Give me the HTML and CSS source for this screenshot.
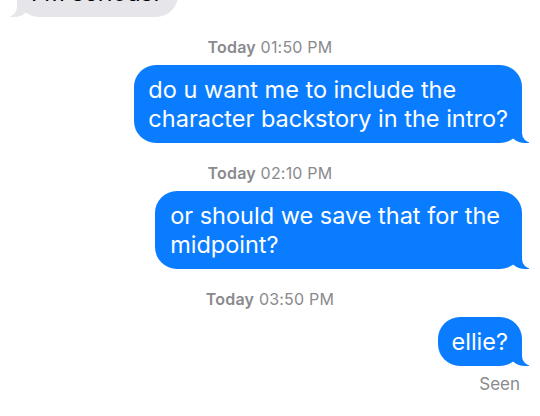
FILE: index.html
```html
<!DOCTYPE html>
<html lang="en">
<head>
    <meta charset="UTF-8">
    <meta name="viewport" content="width=device-width, initial-scale=1.0">
    <title>Messages</title>
    <link rel="stylesheet" href="styles.css">
</head>
<body>

    <div class="thread">
        <div class="bubble received first">I'm serious.</div>

        <p class="stamp"><b>Today</b> 01:50 PM</p>
        <div class="bubble sent">do u want me to include the<br>character backstory in the intro?</div>

        <p class="stamp"><b>Today</b> 02:10 PM</p>
        <div class="bubble sent loose">or should we save that for the<br>midpoint?</div>

        <p class="stamp"><b>Today</b> 03:50 PM</p>
        <div class="bubble sent">ellie?</div>
        <p class="seen">Seen</p>
    </div>

</body>
</html>
```

FILE: styles.css
```css
* {
    margin: 0;
    padding: 0;
    box-sizing: border-box;
    font-family: Inter, 'Liberation Sans', Arial, sans-serif;
}
body {
    background: #ffffff;
    overflow: hidden;
}
.thread {
    display: flex;
    flex-direction: column;
    padding: 0 18px;
}
.bubble {
    position: relative;
    font-size: 23.5px;
    line-height: 29px;
    padding: 10px 14px;
    border-radius: 22px;
}
.received {
    align-self: flex-start;
    background: #e5e5ea;
    color: #000;
    width: 161px;
    margin-left: -1px;
}
.received.first {
    margin-top: -32px;
}
.sent {
    align-self: flex-end;
    background: #0a7cff;
    color: #fff;
}
.sent.loose {
    padding-left: 15px;
    padding-right: 22px;
}
/* tails */
.sent::before,
.received::before {
    content: "";
    position: absolute;
    bottom: 0;
    height: 22px;
    width: 20px;
}
.sent::after,
.received::after {
    content: "";
    position: absolute;
    bottom: 0;
    width: 26px;
    height: 22px;
    background: #fff;
}
.sent::before {
    right: -7px;
    background: #0a7cff;
    border-bottom-left-radius: 16px 14px;
}
.sent::after {
    right: -26px;
    border-bottom-left-radius: 10px;
}
.received::before {
    left: -7px;
    background: #e5e5ea;
    border-bottom-right-radius: 16px 14px;
}
.received::after {
    left: -26px;
    border-bottom-right-radius: 10px;
}
.stamp {
    align-self: center;
    font-size: 16px;
    letter-spacing: 0.2px;
    line-height: 18px;
    color: #8a8a8e;
    margin: 21px 0 9px;
}
.stamp b {
    font-weight: 600;
}
.seen {
    align-self: flex-end;
    font-size: 17px;
    line-height: 18px;
    color: #8a8a8e;
    margin: 9px 2px 0 0;
}
```
